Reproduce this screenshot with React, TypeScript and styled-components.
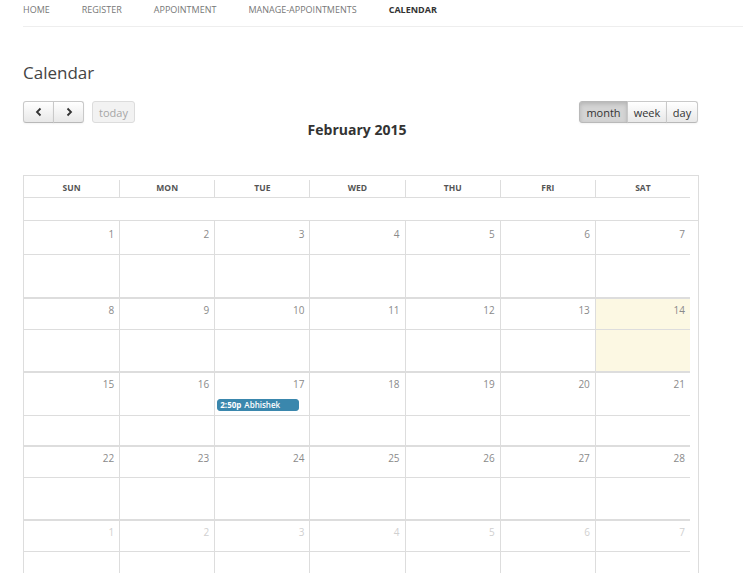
import React from "react";
import styled, { createGlobalStyle, css } from "styled-components";

const GlobalStyle = createGlobalStyle`
  html, body {
    margin: 0;
    padding: 0;
    background: #fff;
    overflow: hidden;
  }
  body {
    font-family: "Open Sans", "Liberation Sans", Arial, sans-serif;
    color: #333;
  }
`;

const Page = styled.div`
  width: 720px;
  padding: 0 9px 0 23px;
`;

const NavBar = styled.ul`
  display: flex;
  gap: 32px;
  margin: 0;
  padding: 3px 0 9px;
  list-style: none;
  border-bottom: 1px solid #eee;
`;

const NavItem = styled.li<{ $active?: boolean }>`
  font-size: 9px;
  line-height: 14px;
  text-transform: uppercase;
  color: ${(p) => (p.$active ? "#333" : "#777")};
  font-weight: ${(p) => (p.$active ? 700 : 400)};
`;

const Heading = styled.h1`
  margin: 34px 0 16px;
  font-size: 17px;
  line-height: 24px;
  font-weight: 400;
  color: #444;
`;

const Toolbar = styled.div`
  display: flex;
  justify-content: space-between;
  align-items: flex-start;
  width: 675px;
`;

const ButtonGroup = styled.div`
  display: flex;
  align-items: center;
  gap: 8px;
`;

const Joined = styled.div`
  display: flex;
`;

const ToolButton = styled.button<{ $active?: boolean; $disabled?: boolean; $w: number }>`
  height: 22px;
  width: ${(p) => p.$w}px;
  padding: 0;
  margin: 0;
  display: flex;
  align-items: center;
  justify-content: center;
  font-family: "Open Sans", "Liberation Sans", Arial, sans-serif;
  font-size: 11px;
  color: #333;
  border: 1px solid #c9c9c9;
  border-bottom-color: #b8b8b8;
  background: linear-gradient(#ffffff, #e8e8e8);
  box-shadow: inset 0 1px 0 rgba(255, 255, 255, 0.2), 0 1px 2px rgba(0, 0, 0, 0.05);
  border-radius: 0;
  & + & {
    margin-left: -1px;
  }
  &:first-child {
    border-radius: 3px 0 0 3px;
  }
  &:last-child {
    border-radius: 0 3px 3px 0;
  }
  &:only-child {
    border-radius: 3px;
  }
  ${(p) =>
    p.$active &&
    css`
      background: #d4d4d4;
      border-color: #b9b9b9;
      box-shadow: inset 0 2px 4px rgba(0, 0, 0, 0.15), 0 1px 2px rgba(0, 0, 0, 0.05);
    `}
  ${(p) =>
    p.$disabled &&
    css`
      background: #f2f2f2;
      border-color: #dcdcdc;
      color: #a6a6a6;
      box-shadow: none;
    `}
`;

const TitleRow = styled.div`
  width: 668px;
  margin-top: -1px;
  text-align: center;
`;

const Title = styled.h2`
  margin: 0;
  font-size: 14px;
  line-height: 16px;
  font-weight: 700;
  color: #333;
`;

const CalendarBox = styled.div`
  margin-top: 37px;
  width: 674px;
  border: 1px solid #ddd;
  border-bottom: none;
`;

const HeadRow = styled.div`
  width: 666px;
  display: grid;
  grid-template-columns: repeat(7, 1fr);
  padding-top: 4px;
  border-bottom: 1px solid #ddd;
`;

const HeadCell = styled.div<{ $first?: boolean }>`
  height: 17px;
  font-size: 8.5px;
  font-weight: 700;
  line-height: 15px;
  color: #555;
  text-align: center;
  text-transform: uppercase;
  border-left: ${(p) => (p.$first ? "none" : "1px solid #ddd")};
`;

const Spacer = styled.div`
  height: 22px;
  border-bottom: 1px solid #ddd;
`;

const WeekRow = styled.div<{ $first?: boolean }>`
  width: 666px;
  height: ${(p) => (p.$first ? 78 : 74)}px;
  box-sizing: border-box;
  border-bottom: 2px solid #ddd;
  display: grid;
  grid-template-columns: repeat(7, 1fr);
  grid-template-rows: auto auto 1fr;
`;

const Cell = styled.div<{ $first?: boolean; $today?: boolean }>`
  border-left: ${(p) => (p.$first ? "none" : "1px solid #ddd")};
  background: ${(p) => (p.$today ? "#fcf8e3" : "transparent")};
  min-width: 0;
`;

const NumberCell = styled(Cell)<{ $top?: boolean; $other?: boolean }>`
  height: ${(p) => (p.$top ? 27 : 24)}px;
  box-sizing: border-box;
  padding: ${(p) => (p.$top ? 6 : 4)}px 5px 0 0;
  text-align: right;
  font-size: 10px;
  line-height: 14px;
  color: ${(p) => (p.$other ? "#d0d0d0" : "#8a8a8a")};
`;

const EventCell = styled(Cell)`
  padding: 2px 0 4px;
  border-bottom: 1px solid #ddd;
`;

const EventBar = styled.div`
  margin: 0 10px 0 2px;
  height: 12px;
  box-sizing: border-box;
  padding: 0 2px;
  background: #3a87ad;
  border: 1px solid #3a87ad;
  border-radius: 3px;
  color: #fff;
  font-size: 8px;
  line-height: 10px;
  white-space: nowrap;
  overflow: hidden;
`;

const EventTime = styled.span`
  font-weight: 700;
  margin-right: 3px;
`;

const EventName = styled.span`
  font-weight: 600;
`;

const Chevron = ({ dir }: { dir: "left" | "right" }) => (
  <svg width="8" height="10" viewBox="0 0 8 10">
    <path
      d={dir === "left" ? "M5.5 1.5 L2 5 L5.5 8.5" : "M2.5 1.5 L6 5 L2.5 8.5"}
      fill="none"
      stroke="#333"
      strokeWidth="1.8"
    />
  </svg>
);

const days = ["Sun", "Mon", "Tue", "Wed", "Thu", "Fri", "Sat"];

type Day = { n: number; other?: boolean; today?: boolean; event?: { time: string; title: string } };

const weeks: Day[][] = [
  [1, 2, 3, 4, 5, 6, 7].map((n) => ({ n })),
  [8, 9, 10, 11, 12, 13, 14].map((n) => ({ n, today: n === 14 })),
  [15, 16, 17, 18, 19, 20, 21].map((n) =>
    n === 17 ? { n, event: { time: "2:50p", title: "Abhishek" } } : { n }
  ),
  [22, 23, 24, 25, 26, 27, 28].map((n) => ({ n })),
  [1, 2, 3, 4, 5, 6, 7].map((n) => ({ n, other: true })),
];

function Week({ week, first }: { week: Day[]; first: boolean }) {
  return (
    <WeekRow $first={first}>
      {week.map((d, i) => (
        <NumberCell key={"n" + i} $first={i === 0} $today={d.today} $top={first} $other={d.other}>
          {d.n}
        </NumberCell>
      ))}
      {week.map((d, i) => (
        <EventCell key={"e" + i} $first={i === 0} $today={d.today}>
          {d.event && (
            <EventBar>
              <EventTime>{d.event.time}</EventTime>
              <EventName>{d.event.title}</EventName>
            </EventBar>
          )}
        </EventCell>
      ))}
      {week.map((d, i) => (
        <Cell key={"f" + i} $first={i === 0} $today={d.today} />
      ))}
    </WeekRow>
  );
}

export default function App() {
  return (
    <>
      <GlobalStyle />
      <Page>
        <NavBar>
          <NavItem>Home</NavItem>
          <NavItem>Register</NavItem>
          <NavItem>Appointment</NavItem>
          <NavItem>Manage-Appointments</NavItem>
          <NavItem $active>Calendar</NavItem>
        </NavBar>
        <Heading>Calendar</Heading>
        <Toolbar>
          <ButtonGroup>
            <Joined>
              <ToolButton $w={31}>
                <Chevron dir="left" />
              </ToolButton>
              <ToolButton $w={31}>
                <Chevron dir="right" />
              </ToolButton>
            </Joined>
            <Joined>
              <ToolButton $w={43} $disabled>
                today
              </ToolButton>
            </Joined>
          </ButtonGroup>
          <Joined>
            <ToolButton $w={49} $active>
              month
            </ToolButton>
            <ToolButton $w={40}>week</ToolButton>
            <ToolButton $w={32}>day</ToolButton>
          </Joined>
        </Toolbar>
        <TitleRow>
          <Title>February 2015</Title>
        </TitleRow>
        <CalendarBox>
          <HeadRow>
            {days.map((d, i) => (
              <HeadCell key={d} $first={i === 0}>
                {d}
              </HeadCell>
            ))}
          </HeadRow>
          <Spacer />
          {weeks.map((w, i) => (
            <Week key={i} week={w} first={i === 0} />
          ))}
        </CalendarBox>
      </Page>
    </>
  );
}
